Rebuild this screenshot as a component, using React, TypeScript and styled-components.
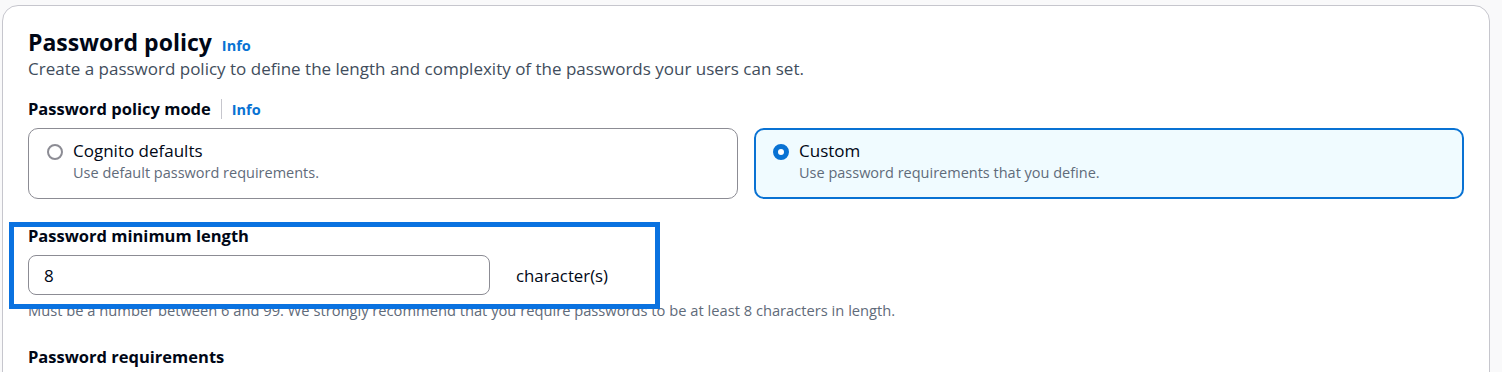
import styled, { createGlobalStyle } from 'styled-components'

const GlobalStyle = createGlobalStyle`
  html, body {
    margin: 0;
    padding: 0;
    background: #f9f9fa;
    font-family: "Open Sans", "Noto Sans", sans-serif;
    color: #000716;
    overflow: hidden;
  }
`

const Page = styled.div`
  position: relative;
  padding: 5px 0 0 2px;
  width: 1488px;
  height: 367px;
  overflow: hidden;
`

const Card = styled.section`
  background: #ffffff;
  border: 1px solid #c6c6cd;
  border-radius: 16px;
  padding: 22px 25px 40px;
  min-height: 400px;
`

const TitleRow = styled.div`
  display: flex;
  align-items: baseline;
  gap: 10px;
`

const Title = styled.h2`
  margin: 0;
  font-size: 23px;
  line-height: 28px;
  font-weight: 700;
`

const InfoLink = styled.a`
  color: #0972d3;
  font-size: 14.5px;
  font-weight: 700;
  text-decoration: none;
`

const Description = styled.p`
  margin: 2px 0 0;
  font-size: 17px;
  line-height: 22px;
  color: #414d5c;
`

const FieldLabelRow = styled.div<{ $top?: string }>`
  display: flex;
  align-items: center;
  height: 22px;
  margin-top: ${(p) => p.$top || '0'};
`

const FieldLabel = styled.span`
  font-size: 16.5px;
  line-height: 22px;
  font-weight: 700;
`

const Divider = styled.span`
  width: 1px;
  height: 20px;
  background: #c6c6cd;
  margin: 0 10px;
`

const Tiles = styled.div`
  display: grid;
  grid-template-columns: 1fr 1fr;
  gap: 16px;
  margin-top: 8px;
`

const Tile = styled.label<{ $selected?: boolean }>`
  display: flex;
  gap: 10px;
  height: 71px;
  box-sizing: border-box;
  border-radius: 10px;
  border: ${(p) => (p.$selected ? '2px solid #0972d3' : '1px solid #8c8c94')};
  background: ${(p) => (p.$selected ? '#f0fbff' : '#ffffff')};
  padding: ${(p) => (p.$selected ? '10px 17px' : '11px 18px')};
`

const Radio = styled.span<{ $checked?: boolean }>`
  flex: none;
  width: 16px;
  height: 16px;
  margin-top: 4px;
  border-radius: 50%;
  box-sizing: border-box;
  border: ${(p) => (p.$checked ? '5px solid #0972d3' : '2px solid #8c8c94')};
  background: #ffffff;
`

const TileText = styled.div`
  display: flex;
  flex-direction: column;
`

const TileLabel = styled.span`
  font-size: 17px;
  line-height: 22px;
`

const TileDesc = styled.span`
  font-size: 14.5px;
  line-height: 22px;
  color: #5f6b7a;
`

const InputRow = styled.div`
  display: flex;
  align-items: center;
  gap: 26px;
  margin-top: 8px;
`

const TextInput = styled.input`
  width: 462px;
  height: 40px;
  box-sizing: border-box;
  border: 1px solid #8c8c94;
  border-radius: 8px;
  padding: 0 15px;
  font-family: inherit;
  font-size: 17px;
  color: #000716;
  outline: none;
`

const Unit = styled.span`
  font-size: 16.8px;
`

const Hint = styled.p`
  margin: 5px 0 0;
  font-size: 14.7px;
  line-height: 20px;
  color: #5f6b7a;
`

const Highlight = styled.div`
  position: absolute;
  left: 9px;
  top: 222px;
  width: 651px;
  height: 87px;
  box-sizing: border-box;
  border: 5px solid #0a72e0;
  pointer-events: none;
`

export default function App() {
  return (
    <>
      <GlobalStyle />
      <Page>
        <Card>
          <TitleRow>
            <Title>Password policy</Title>
            <InfoLink>Info</InfoLink>
          </TitleRow>
          <Description>
            Create a password policy to define the length and complexity of the passwords your users can set.
          </Description>

          <FieldLabelRow $top="18px">
            <FieldLabel>Password policy mode</FieldLabel>
            <Divider />
            <InfoLink>Info</InfoLink>
          </FieldLabelRow>
          <Tiles>
            <Tile>
              <Radio />
              <TileText>
                <TileLabel>Cognito defaults</TileLabel>
                <TileDesc>Use default password requirements.</TileDesc>
              </TileText>
            </Tile>
            <Tile $selected>
              <Radio $checked />
              <TileText>
                <TileLabel>Custom</TileLabel>
                <TileDesc>Use password requirements that you define.</TileDesc>
              </TileText>
            </Tile>
          </Tiles>

          <FieldLabelRow $top="26px">
            <FieldLabel>Password minimum length</FieldLabel>
          </FieldLabelRow>
          <InputRow>
            <TextInput defaultValue="8" />
            <Unit>character(s)</Unit>
          </InputRow>
          <Hint>
            Must be a number between 6 and 99. We strongly recommend that you require passwords to be at least 8 characters in length.
          </Hint>

          <FieldLabelRow $top="26px">
            <FieldLabel>Password requirements</FieldLabel>
          </FieldLabelRow>
        </Card>
        <Highlight />
      </Page>
    </>
  )
}
